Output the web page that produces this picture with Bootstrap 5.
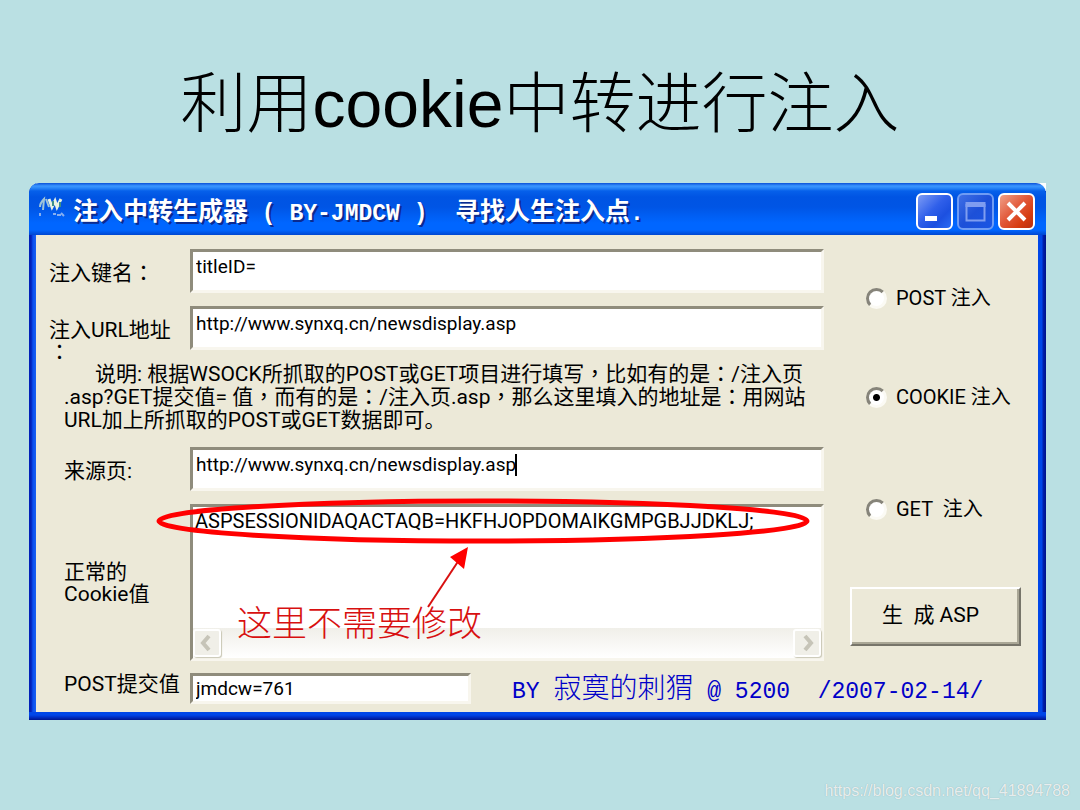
<!DOCTYPE html>
<html lang="zh-CN">
<head>
<meta charset="utf-8">
<meta name="viewport" content="width=device-width, initial-scale=1">
<title>利用cookie中转进行注入</title>
<link href="https://cdn.jsdelivr.net/npm/bootstrap@5.3.0/dist/css/bootstrap.min.css" rel="stylesheet">
<style>
  body { background: #bae0e3; color: #000; font-family: Roboto, "Noto Sans CJK SC", sans-serif; font-size: 21px; line-height: 23px; }
  .slide-title { font: 300 66px/80px "Liberation Sans", "Noto Sans CJK SC", sans-serif; padding: 64px 0 39px; }
  .xp-wrap { padding: 0 34px 0 29px; }
  .xp-window { padding: 0 8px 8px 7px; border-radius: 10px 0 0 0;
    background:
      linear-gradient(#fff, #fff) right top / 8px 8px no-repeat,
      linear-gradient(#0046e8 0 3px, #0030c8 5px, #00148c 8px) left bottom / 100% 8px no-repeat,
      linear-gradient(90deg, #0020b8 0 2px, #0a50f0 4px, #1a60f0 7px) left top / 7px 100% no-repeat,
      linear-gradient(90deg, #0046e8 0 4px, #0020b0 5px, #00128a 8px) right top / 8px 100% no-repeat,
      #ece9d8; }
  .xp-titlebar { height: 52px; margin: 0 -8px 0 -7px; padding: 0 11px 0 9px; border-radius: 10px 10px 0 0; background: linear-gradient(#0a50d8 0, #3b96ff 3px, #2a86f8 5px, #0660ea 8px, #0054e3 14px, #0055e5 24px, #0066ff 40px, #0066ff 47px, #0046d0 52px); }
  .xp-caption { font: 700 25px/30px "Noto Sans CJK SC", sans-serif; color: #fff; text-shadow: 2px 2px 0 #0a2a90; white-space: pre; padding: 2px 0 0 7px; }
  .mono { font-family: "Liberation Mono", monospace; font-size: 23px; line-height: 23px; }
  .mid { font-family: Roboto, "Noto Sans CJK TC", sans-serif; }
  .xp-ctl { width: 37px; height: 37px; padding: 0; border: 2px solid #fff; border-radius: 6px; background: linear-gradient(135deg, #7d9cf5, #2f5fea 45%, #1c50e0 70%, #2a6cf4); }
  .xp-ctl svg { display: block; width: 100%; height: 100%; }
  .xp-ctl:disabled { border-color: #6f9cf4; background: linear-gradient(135deg, #3f6fe6, #1d50d8 50%, #1a55e4); }
  .xp-close { background: linear-gradient(135deg, #f0a088, #e2593a 45%, #d63c10 75%, #b83010); }
  .form-cols { display: grid; grid-template-columns: minmax(0, 1fr) 214px; }
  .field-cols { display: grid; grid-template-columns: 154px minmax(0, 1fr); align-items: start; padding: 14px 0 8px; }
  .field-cols label { line-height: 22px; padding-left: 28px; }
  .field-cols label.outer { padding-left: 13px; }
  .field-cols label.drop { padding-top: 13px; }
  .field-cols label.tall { padding-top: 57px; }
  .sunken { border: 3px solid; border-color: #8f8c7c #f8f6ee #f8f6ee #8f8c7c; background: #fff; border-radius: 0; color: #000; padding: 0 3px; font-size: 19px; line-height: 24px; display: block; }
  .one-line { height: 44px; padding-bottom: 9px; width: 100%; }
  .gap-below { margin-bottom: 13px; }
  .hint { grid-column: 1 / -1; padding-left: 28px; margin-bottom: 15px; white-space: nowrap; }
  .hint-indent { padding-left: 31px; }
  .caret { position: absolute; left: 325px; top: 7px; width: 2px; height: 22px; background: #000; }
  .cookie-box { height: 157px; margin-bottom: 12px; }
  .cookie-box textarea { resize: none; width: 100%; flex: 1; min-height: 0; border: 0; padding: 2px 0 0 2px; font-size: 20px; line-height: 24px; overflow: hidden; white-space: pre; background: transparent; outline: 0; }
  .h-scroll { height: 30px; background: linear-gradient(#f0efe9, #fff); }
  .scroll-btn { width: 28px; height: 28px; padding: 0; border: 2px solid #fff; border-radius: 3px; background: #f0efe8; box-shadow: 1px 1px 1px #c9c7b4; }
  .scroll-btn svg { display: block; width: 100%; height: 100%; }
  .ring { position: absolute; left: -38px; top: -11px; width: calc(100% + 26px); height: 54px; pointer-events: none; overflow: visible; }
  .arrow-mark { position: absolute; left: 234px; top: 39px; width: 46px; height: 64px; pointer-events: none; }
  .remark { position: absolute; left: 44px; top: 98px; font-size: 35px; line-height: 40px; color: #d81010; font-weight: 300; white-space: nowrap; }
  .submit-box { height: 31px; width: 281px; }
  .author { font-size: 28px; line-height: 31px; height: 31px; color: #0000c8; white-space: pre; padding-left: 41px; font-weight: 300; }
  .side { padding: 52px 17px 0 42px; font-size: 20px; }
  .choice { display: flex; align-items: center; gap: 9px; height: 23px; white-space: pre; margin-bottom: 76px; }
  .choice.wide { margin-bottom: 89px; }
  .choice input { appearance: none; width: 21px; height: 21px; margin: 0; border-radius: 50%; background: #fff; border: 3px solid; border-color: #86847a #fbfaf4 #fbfaf4 #86847a; }
  .choice input:checked { background: radial-gradient(circle, #000 0 3px, #fff 4px); }
  .make { height: 59px; margin: -10px 0 0 -16px; background: #ece9d8; border: solid; border-width: 2px; border-color: #fff #77756a #77756a #fff; border-radius: 0; font-size: 21px; color: #000; padding: 0 10px 2px 0; box-shadow: inset -2px -2px 0 #aaa796; white-space: pre; }
  .watermark { font: 16px/20px "Liberation Sans", sans-serif; color: rgba(255,255,255,.8); text-shadow: 0 0 1px #8aa5a8; padding: 0 10px 9px; }
</style>
</head>
<body class="d-flex flex-column min-vh-100">
<h1 class="slide-title text-center m-0">利用cookie中转进行注入</h1>

<main class="xp-wrap">
  <section class="xp-window">
    <header class="xp-titlebar d-flex align-items-center">
      <svg class="flex-shrink-0" width="28" height="28" viewBox="0 0 28 28" fill="none" aria-hidden="true">
        <path d="M2 12c0-4 2-6 4-8l-1 11M8 4l3 8" stroke="#9fc4d8" stroke-width="2"/>
        <path d="M11 4l3 8 3-6 2 6 4-8" stroke="#e6f2e4" stroke-width="3"/>
        <path d="M15 6v5M22 7v5" stroke="#3c8f8a" stroke-width="2"/>
        <path d="M2 18v3M15 19h3M19 20h4M23 18l3 3" stroke="#86aef0" stroke-width="2"/>
      </svg>
      <div class="xp-caption">注入中转生成器<span class="mono"> ( BY-JMDCW )  </span>寻找人生注入点<span class="mono">.</span></div>
      <div class="d-flex ms-auto gap-1 mt-1">
        <button type="button" class="xp-ctl" aria-label="最小化"><svg viewBox="0 0 33 33"><path d="M7 21h12v5H7z" fill="#fff"/></svg></button>
        <button type="button" class="xp-ctl" aria-label="最大化" disabled><svg viewBox="0 0 33 33"><path d="M7.500 9v16.500h18V9" fill="none" stroke="#7f9df0" stroke-width="2"/><path d="M6.500 7h20v5h-20z" fill="#7f9df0"/></svg></button>
        <button type="button" class="xp-ctl xp-close" aria-label="关闭"><svg viewBox="0 0 33 33"><path d="M8 8l17 17M25 8L8 25" stroke="#fff" stroke-width="4"/></svg></button>
      </div>
    </header>

    <form class="form-cols">
      <div class="field-cols">
        <label for="key" class="outer drop">注入键名<span class="mid" lang="zh-TW">：</span></label>
        <input id="key" class="sunken one-line gap-below" value="titleID=">

        <label for="url" class="outer drop">注入URL地址<br><span class="mid" lang="zh-TW">：</span></label>
        <input id="url" class="sunken one-line" value="http://www.synxq.cn/newsdisplay.asp">

        <p class="hint"><span class="hint-indent">说明: 根据WSOCK所抓取的POST或GET项目进行填写<span class="mid" lang="zh-TW">，</span>比如有的是<span class="mid" lang="zh-TW">：</span>/注入页</span><br>.asp?GET提交值= 值<span class="mid" lang="zh-TW">，</span>而有的是<span class="mid" lang="zh-TW">：</span>/注入页.asp<span class="mid" lang="zh-TW">，</span>那么这里填入的地址是<span class="mid" lang="zh-TW">：</span>用网站<br>URL加上所抓取的POST或GET数据即可。</p>

        <label for="ref" class="drop">来源页:</label>
        <div class="position-relative gap-below">
          <input id="ref" class="sunken one-line" value="http://www.synxq.cn/newsdisplay.asp">
          <span class="caret"></span>
        </div>

        <label for="ck" class="tall">正常的<br>Cookie值</label>
        <div class="cookie-box sunken position-relative d-flex flex-column p-0">
          <textarea id="ck" spellcheck="false">ASPSESSIONIDAQACTAQB=HKFHJOPDOMAIKGMPGBJJDKLJ;</textarea>
          <div class="h-scroll d-flex justify-content-between align-items-center">
            <button type="button" class="scroll-btn" aria-label="向左"><svg viewBox="0 0 24 24"><path d="M14 5l-6 7 6 7" fill="none" stroke="#c6c4b8" stroke-width="4"/></svg></button>
            <button type="button" class="scroll-btn" aria-label="向右"><svg viewBox="0 0 24 24"><path d="M10 5l6 7-6 7" fill="none" stroke="#c6c4b8" stroke-width="4"/></svg></button>
          </div>
          <svg class="ring" viewBox="0 0 654 54" preserveAspectRatio="none" aria-hidden="true"><ellipse cx="328" cy="25" rx="324" ry="20" fill="none" stroke="#f00" stroke-width="5"/></svg>
          <svg class="arrow-mark" viewBox="0 0 46 64" aria-hidden="true"><path d="M1 61L32 14" stroke="#d81010" stroke-width="2"/><path d="M41 1L23 11l14 12z" fill="#f00"/></svg>
          <div class="remark">这里不需要修改</div>
        </div>

        <label for="post">POST提交值</label>
        <div class="d-flex">
          <input id="post" class="sunken submit-box flex-shrink-0" value="jmdcw=761">
          <div class="author"><span class="mono">BY </span>寂寞的刺猬<span class="mono"> @ 5200  /2007-02-14/</span></div>
        </div>
      </div>

      <div class="side d-flex flex-column">
        <label class="choice"><input type="radio" name="mode">POST 注入</label>
        <label class="choice wide"><input type="radio" name="mode" checked>COOKIE 注入</label>
        <label class="choice"><input type="radio" name="mode">GET  注入</label>
        <button type="button" class="make">生  成 ASP</button>
      </div>
    </form>
  </section>
</main>

<footer class="watermark text-end mt-auto">https://blog.csdn.net/qq_41894788</footer>
<script src="https://cdn.jsdelivr.net/npm/bootstrap@5.3.0/dist/js/bootstrap.bundle.min.js"></script>
</body>
</html>
